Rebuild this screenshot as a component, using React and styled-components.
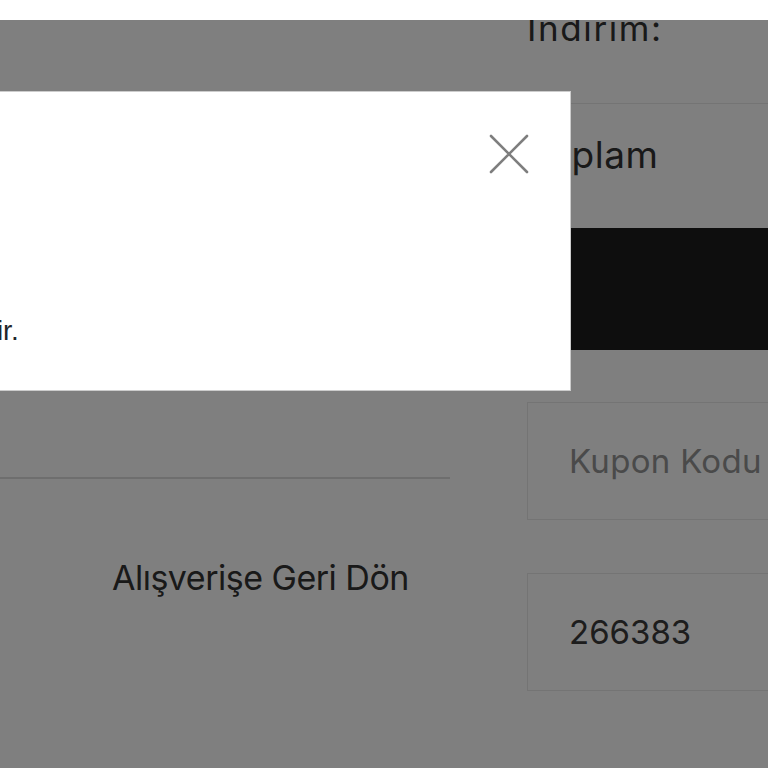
import React from 'react';
import styled, { createGlobalStyle } from 'styled-components';

const GlobalStyle = createGlobalStyle`
    html, body {
        margin: 0;
        padding: 0;
        background: #ffffff;
        overflow: hidden;
        height: 768px;
    }
    * {
        box-sizing: border-box;
    }
`;

const TopBar = styled.div`
    position: fixed;
    top: 0;
    left: 0;
    right: 0;
    height: 20px;
    background: #ffffff;
    z-index: 30;
`;

const Page = styled.div`
    display: grid;
    grid-template-columns: 450px 380px;
    column-gap: 77px;
    font-family: Inter, "Noto Sans", sans-serif;
    color: #333333;
    width: 1000px;
`;

const CartColumn = styled.div`
    padding-top: 477px;
`;

const Divider = styled.div`
    height: 2px;
    background: #dcdcdc;
`;

const BackLink = styled.a`
    display: block;
    margin-top: 80px;
    padding-left: 112px;
    font-size: 34px;
    line-height: 38px;
    letter-spacing: -0.5px;
    color: #333333;
    text-decoration: none;
`;

const Summary = styled.div`
    display: flex;
    flex-direction: column;
`;

const SummaryRow = styled.div`
    height: ${(p) => p.$height}px;
    padding-top: ${(p) => p.$pad}px;
    border-bottom: ${(p) => (p.$line ? '1px solid #e8e8e8' : 'none')};
    font-size: ${(p) => p.$size}px;
    letter-spacing: ${(p) => p.$spacing || 0}px;
    line-height: 1.2;
    color: #333333;
`;

const CheckoutButton = styled.button`
    height: 122px;
    border: none;
    background: #1c1c1c;
`;

const Field = styled.div`
    height: 118px;
    margin-top: ${(p) => p.$top}px;
    border: 1px solid #e8e8e8;
    display: flex;
    align-items: center;
    padding-left: 41px;
    font-size: 33px;
    letter-spacing: ${(p) => (p.$placeholder ? 0.3 : 0)}px;
    color: ${(p) => (p.$placeholder ? '#949494' : '#3a3a3a')};
`;

const Overlay = styled.div`
    position: fixed;
    top: 20px;
    left: 0;
    right: 0;
    bottom: 0;
    background: rgba(0, 0, 0, 0.5);
    z-index: 10;
`;

const Modal = styled.div`
    position: fixed;
    top: 91px;
    left: -430px;
    width: 1001px;
    height: 300px;
    background: #ffffff;
    border: 1px solid rgba(0, 0, 0, 0.2);
    z-index: 20;
    display: flex;
    flex-direction: column;
    font-family: "Liberation Sans", Arial, sans-serif;
    color: #212529;
`;

const ModalHeader = styled.div`
    display: flex;
    justify-content: flex-end;
    padding: 42px 41px 0 0;
`;

const CloseButton = styled.button`
    width: 40px;
    height: 40px;
    padding: 0;
    border: none;
    background: transparent;
    opacity: 0.5;
    cursor: pointer;
    display: flex;
    align-items: center;
    justify-content: center;
`;

const ModalBody = styled.div`
    padding: 0 0 0 57px;
    margin-top: 140px;
    font-size: 28px;
    line-height: 34px;
`;

const CloseIcon = () => (
    <svg width="40" height="40" viewBox="0 0 40 40">
        <path d="M2 2 L38 38 M38 2 L2 38" stroke="#000" strokeWidth="2.6" strokeLinecap="round" />
    </svg>
);

const App = () => {
    return (
        <>
            <GlobalStyle />
            <TopBar />
            <Page>
                <CartColumn>
                    <Divider />
                    <BackLink href="#">Alışverişe Geri Dön</BackLink>
                </CartColumn>
                <Summary>
                    <SummaryRow $height={104} $pad={7} $size={35} $spacing={1.6} $line>
                        İndirim:
                    </SummaryRow>
                    <SummaryRow $height={124} $pad={29} $size={37} $spacing={0.6}>
                        Toplam
                    </SummaryRow>
                    <CheckoutButton aria-label="Siparişi Tamamla" />
                    <Field $top={52} $placeholder>Kupon Kodu</Field>
                    <Field $top={53}>266383</Field>
                </Summary>
            </Page>
            <Overlay />
            <Modal>
                <ModalHeader>
                    <CloseButton aria-label="Kapat">
                        <CloseIcon />
                    </CloseButton>
                </ModalHeader>
                <ModalBody>Kupon kodu girmeniz gereklidir.</ModalBody>
            </Modal>
        </>
    );
};

export default App;
